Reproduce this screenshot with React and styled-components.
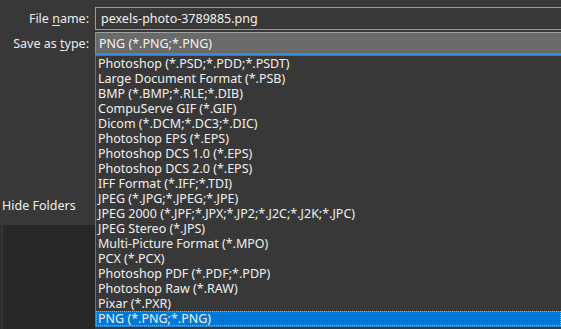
import React from "react";
import styled, { createGlobalStyle } from "styled-components";

const Global = createGlobalStyle`
  html, body { margin: 0; padding: 0; background: #383838; }
  body { width: 561px; height: 329px; overflow: hidden; font-family: "Noto Sans", "Open Sans", sans-serif; }
`;

const Page = styled.div`
  position: relative;
  width: 561px;
  height: 329px;
  background: #383838;
  color: #ececec;
  font-size: 12.5px;
  display: flex;
  flex-direction: column;
  overflow: hidden;
`;

const Form = styled.div`
  display: grid;
  grid-template-columns: 95px 1fr;
  row-gap: 2px;
  padding-top: 7px;
`;

const Label = styled.label`
  display: flex;
  align-items: center;
  justify-content: flex-end;
  padding-right: 6px;
  height: 23px;
  color: #ececec;
  white-space: pre;
`;

const Key = styled.span`
  text-decoration: underline;
  text-underline-offset: 2px;
`;

const TextBox = styled.div`
  box-sizing: border-box;
  height: 23px;
  border: 1px solid #9a9a9a;
  border-right: none;
  background: #383838;
  display: flex;
  align-items: center;
  padding-left: 5px;
  color: #f2f2f2;
`;

const Combo = styled.div`
  box-sizing: border-box;
  height: 23px;
  border-top: 1px solid #a2a2a2;
  border-left: 1px solid #8a8a8a;
  border-bottom: 2px solid #3a8ad8;
  background: #6a6a6a;
  display: flex;
  align-items: center;
  padding-left: 3px;
  color: #f6f6f6;
`;

const Lower = styled.div`
  flex: 1;
  display: flex;
  flex-direction: column;
`;

const Toggle = styled.div`
  margin-top: 142px;
  height: 17px;
  padding-left: 2px;
  display: flex;
  align-items: center;
  color: #f0f0f0;
`;

const Pane = styled.div`
  margin-top: 11px;
  width: 93px;
  flex: 1;
  background: #272727;
  border-left: 2px solid #2f2f2f;
  box-shadow: inset 1px 0 0 #3a3a3a;
`;

const List = styled.ul`
  position: absolute;
  top: 55px;
  left: 95px;
  right: 0;
  margin: 0;
  padding: 0;
  list-style: none;
  border: 1px solid #2f7fcc;
  border-right: none;
  background: #383838;
`;

const Item = styled.li`
  box-sizing: border-box;
  height: 15px;
  line-height: 15px;
  overflow: hidden;
  padding-left: 2px;
  white-space: nowrap;
  color: #f0f0f0;
  background: ${(p) => (p.$selected ? "#0078d7" : "transparent")};
  outline: ${(p) => (p.$selected ? "1px dotted #f59a3a" : "none")};
  outline-offset: -1px;
`;

const types = [
  "Photoshop (*.PSD;*.PDD;*.PSDT)",
  "Large Document Format (*.PSB)",
  "BMP (*.BMP;*.RLE;*.DIB)",
  "CompuServe GIF (*.GIF)",
  "Dicom (*.DCM;*.DC3;*.DIC)",
  "Photoshop EPS (*.EPS)",
  "Photoshop DCS 1.0 (*.EPS)",
  "Photoshop DCS 2.0 (*.EPS)",
  "IFF Format (*.IFF;*.TDI)",
  "JPEG (*.JPG;*.JPEG;*.JPE)",
  "JPEG 2000 (*.JPF;*.JPX;*.JP2;*.J2C;*.J2K;*.JPC)",
  "JPEG Stereo (*.JPS)",
  "Multi-Picture Format (*.MPO)",
  "PCX (*.PCX)",
  "Photoshop PDF (*.PDF;*.PDP)",
  "Photoshop Raw (*.RAW)",
  "Pixar (*.PXR)",
  "PNG (*.PNG;*.PNG)",
];

export default function App() {
  return (
    <Page>
      <Global />
      <Form>
        <Label><span>File <Key>n</Key>ame:</span></Label>
        <TextBox>pexels-photo-3789885.png</TextBox>
        <Label><span>Save as <Key>t</Key>ype:</span></Label>
        <Combo>PNG (*.PNG;*.PNG)</Combo>
      </Form>
      <Lower>
        <Toggle>Hide Folders</Toggle>
        <Pane />
      </Lower>
      <List>
        {types.map((t) => (
          <Item key={t} $selected={t === "PNG (*.PNG;*.PNG)"}>{t}</Item>
        ))}
      </List>
    </Page>
  );
}
